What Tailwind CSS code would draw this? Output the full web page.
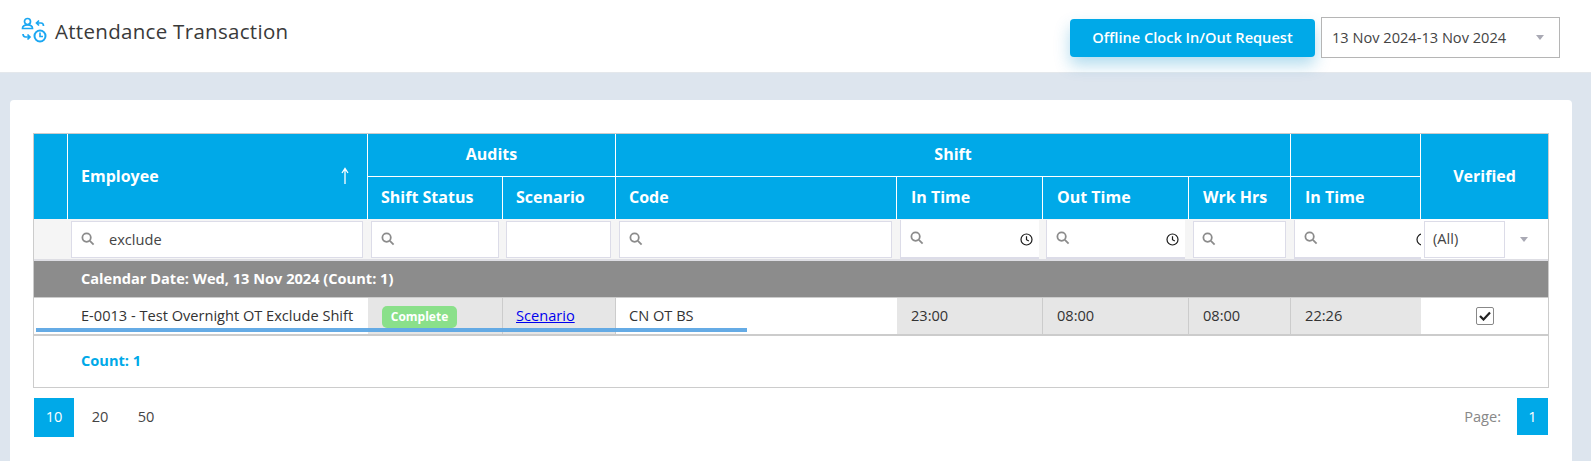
<!DOCTYPE html>
<html lang="en">
<head>
  <meta charset="UTF-8" />
  <title>Attendance Transaction</title>
  <script src="https://cdn.jsdelivr.net/npm/@tailwindcss/browser@4"></script>
</head>
<body class="bg-[#dde5ee] h-[461px] overflow-hidden font-['Open_Sans',sans-serif] text-[14.6px] text-[#333]">

  <!-- Top bar -->
  <header class="h-[73px] bg-white border-b border-[#e4e8ec] flex items-start pl-[21px] pr-[31px]">
    <svg class="mt-[17px] w-[26px] h-[26px] text-[#1aa7f2]" viewBox="0 0 26 26" fill="none" stroke="currentColor" stroke-width="1.700">
      <circle cx="6.500" cy="4.500" r="3"/>
      <path d="M1.500 11.500c0-2.500 2.200-3.700 5-3.700s5 1.200 5 3.700z"/>
      <path d="M18 3.500 15.500 6 18 8.500M15.500 6H20c1.500 0 2.500 1 2.500 3"/>
      <path d="M6.500 17.500 9 20l-2.500 2.500M9 20H4.500C3 20 2 19 2 17"/>
      <circle cx="19" cy="19" r="5.500" stroke-width="2"/>
      <path d="M19 15.500V19.500h3" stroke-width="1.600"/>
    </svg>
    <h1 class="ml-[8px] mt-[17px] text-[20.500px] leading-[28px] font-medium tracking-[0.3px] text-[#3a3a3a]">Attendance Transaction</h1>
    <div class="ml-auto flex items-start">
      <button class="mt-[19px] w-[245px] h-[38px] rounded-[4px] bg-[#00a9e8] text-white font-semibold text-[14.6px] shadow-[0_8px_16px_rgba(0,140,200,0.3)]">Offline Clock In/Out Request</button>
      <div class="ml-[6px] mt-[17px] w-[239px] h-[41px] border border-[#b5b5b5] bg-white flex items-center pl-[10px] pr-[15px] text-[#444]">
        <span>13 Nov 2024-13 Nov 2024</span>
        <span class="ml-auto w-0 h-0 border-x-[4px] border-x-transparent border-t-[5px] border-t-[#a9a9b4]"></span>
      </div>
    </div>
  </header>

  <!-- Card -->
  <main class="ml-[10px] mr-[19px] mt-[27px] h-[361px] bg-white rounded-t-[4px] pl-[23px] pr-[23px] pt-[33px]">
    <div class="relative border border-[#ccc] h-[255px]">
      <table class="table-fixed border-separate border-spacing-0 w-[1514px]">
        <colgroup>
          <col class="w-[34px]"/><col class="w-[300px]"/><col class="w-[135px]"/><col class="w-[113px]"/><col class="w-[281px]"/>
          <col class="w-[146px]"/><col class="w-[146px]"/><col class="w-[102px]"/><col class="w-[130px]"/><col class="w-[127px]"/>
        </colgroup>
        <thead class="bg-[#00a9e8] text-white text-[16px]">
          <tr class="h-[43px]">
            <th rowspan="2" class="border-r border-white"></th>
            <th rowspan="2" class="border-r border-white text-left pl-[13px] pb-[2px] font-bold">
              <div class="flex items-center pr-[17px]">
                <span>Employee</span>
                <svg class="ml-auto w-[10px] h-[18px]" viewBox="0 0 10 18" fill="none" stroke="white" stroke-width="1.300"><path d="M5 17V2M2 6l3-4.500L8 6"/></svg>
              </div>
            </th>
            <th colspan="2" class="border-r border-b border-white pb-[2px] font-bold">Audits</th>
            <th colspan="4" class="border-r border-b border-white pb-[2px] font-bold">Shift</th>
            <th class="border-r border-b border-white"></th>
            <th rowspan="2" class="pb-[2px] font-bold">Verified</th>
          </tr>
          <tr class="h-[42px] text-left">
            <th class="border-r border-white pl-[13px] pb-[2px] font-bold">Shift Status</th>
            <th class="border-r border-white pl-[13px] pb-[2px] font-bold">Scenario</th>
            <th class="border-r border-white pl-[13px] pb-[2px] font-bold">Code</th>
            <th class="border-r border-white pl-[14px] pb-[2px] font-bold">In Time</th>
            <th class="border-r border-white pl-[14px] pb-[2px] font-bold">Out Time</th>
            <th class="border-r border-white pl-[14px] pb-[2px] font-bold">Wrk Hrs</th>
            <th class="border-r border-white pl-[14px] pb-[2px] font-bold">In Time</th>
          </tr>
        </thead>
        <tbody>
          <!-- Filter row -->
          <tr class="h-[42px] bg-[#f5f5f5]">
            <td class="border-b-2 border-[#dedee4]"></td>
            <td class="border-b-2 border-[#dedee4] pl-[3px] pr-[5px]">
              <div class="h-[37px] border border-[#dcdce8] bg-white flex items-center pl-[9px] gap-[14px]">
                <svg class="w-[14px] h-[14px] shrink-0" viewBox="0 0 15 15" fill="none" stroke="#8b8b8b" stroke-width="1.900"><circle cx="6" cy="6" r="4.500"/><path d="m9.500 9.500 4 4"/></svg>
                <span class="text-[#444] pt-[2px]">exclude</span>
              </div>
            </td>
            <td class="border-b-2 border-[#dedee4] pl-[3px] pr-[4px]">
              <div class="h-[37px] border border-[#dcdce8] bg-white flex items-center pl-[9px]">
                <svg class="w-[14px] h-[14px]" viewBox="0 0 15 15" fill="none" stroke="#8b8b8b" stroke-width="1.900"><circle cx="6" cy="6" r="4.500"/><path d="m9.500 9.500 4 4"/></svg>
              </div>
            </td>
            <td class="border-b-2 border-[#dedee4] pl-[3px] pr-[5px]">
              <div class="h-[37px] border border-[#dcdce8] bg-white"></div>
            </td>
            <td class="border-b-2 border-[#dedee4] pl-[3px] pr-[5px]">
              <div class="h-[37px] border border-[#dcdce8] bg-white flex items-center pl-[9px]">
                <svg class="w-[14px] h-[14px]" viewBox="0 0 15 15" fill="none" stroke="#8b8b8b" stroke-width="1.900"><circle cx="6" cy="6" r="4.500"/><path d="m9.500 9.500 4 4"/></svg>
              </div>
            </td>
            <td class="border-b-2 border-[#dedee4] pl-[3px] pr-[4px]">
              <div class="h-[39px] border-l border-b-2 border-[#dcdce8] bg-white flex items-center pl-[9px] pr-[6px]">
                <svg class="w-[14px] h-[14px]" viewBox="0 0 15 15" fill="none" stroke="#8b8b8b" stroke-width="1.900"><circle cx="6" cy="6" r="4.500"/><path d="m9.500 9.500 4 4"/></svg>
                <svg class="ml-auto w-[13px] h-[13px] mt-[3px]" viewBox="0 0 13 13" fill="none" stroke="#1a1a1a" stroke-width="1.200"><circle cx="6.500" cy="6.500" r="5.500"/><path d="M6.500 3.200v3.500l2.300 1.300"/></svg>
              </div>
            </td>
            <td class="border-b-2 border-[#dedee4] pl-[3px] pr-[4px]">
              <div class="h-[39px] border-l border-b-2 border-[#dcdce8] bg-white flex items-center pl-[9px] pr-[6px]">
                <svg class="w-[14px] h-[14px]" viewBox="0 0 15 15" fill="none" stroke="#8b8b8b" stroke-width="1.900"><circle cx="6" cy="6" r="4.500"/><path d="m9.500 9.500 4 4"/></svg>
                <svg class="ml-auto w-[13px] h-[13px] mt-[3px]" viewBox="0 0 13 13" fill="none" stroke="#1a1a1a" stroke-width="1.200"><circle cx="6.500" cy="6.500" r="5.500"/><path d="M6.500 3.200v3.500l2.300 1.300"/></svg>
              </div>
            </td>
            <td class="border-b-2 border-[#dedee4] pl-[4px] pr-[5px]">
              <div class="h-[37px] border border-[#dcdce8] bg-white flex items-center pl-[8px]">
                <svg class="w-[14px] h-[14px]" viewBox="0 0 15 15" fill="none" stroke="#8b8b8b" stroke-width="1.900"><circle cx="6" cy="6" r="4.500"/><path d="m9.500 9.500 4 4"/></svg>
              </div>
            </td>
            <td class="border-b-2 border-[#dedee4] pl-[3px]">
              <div class="h-[39px] border-l border-b-2 border-[#dcdce8] bg-white flex items-center pl-[9px] overflow-hidden">
                <svg class="w-[14px] h-[14px]" viewBox="0 0 15 15" fill="none" stroke="#8b8b8b" stroke-width="1.900"><circle cx="6" cy="6" r="4.500"/><path d="m9.500 9.500 4 4"/></svg>
                <svg class="ml-auto mr-[-8px] w-[13px] h-[13px] mt-[3px]" viewBox="0 0 13 13" fill="none" stroke="#1a1a1a" stroke-width="1.200"><circle cx="6.500" cy="6.500" r="5.500"/><path d="M6.500 3.200v3.500l2.300 1.300"/></svg>
              </div>
            </td>
            <td class="border-b-2 border-[#dedee4] pl-[3px] bg-white">
              <div class="flex items-center">
                <div class="w-[81px] h-[37px] border border-[#dcdce8] flex items-center pl-[8px] text-[#444]">(All)</div>
                <span class="ml-[15px] w-0 h-0 border-x-[4px] border-x-transparent border-t-[5px] border-t-[#a9a9b4]"></span>
              </div>
            </td>
          </tr>
          <!-- Group row -->
          <tr class="h-[36px] bg-[#8c8c8c] text-white">
            <td colspan="10" class="pl-[47px] font-bold">Calendar Date: Wed, 13 Nov 2024 (Count: 1)</td>
          </tr>
          <!-- Data row -->
          <tr class="h-[39px]">
            <td class="border-t border-b-2 border-[#ccc]"></td>
            <td class="border-t border-b-2 border-[#ccc] pl-[13px] whitespace-nowrap">E-0013 - Test Overnight OT Exclude Shift</td>
            <td class="bg-[#e6e6e6] border-t border-r border-b-2 border-[#ccc] pl-[14px]">
              <span class="inline-flex items-center justify-center w-[75px] h-[22px] rounded-[5px] bg-[#8ae08a] text-white text-[12px] font-bold">Complete</span>
            </td>
            <td class="bg-[#e6e6e6] border-t border-r border-b-2 border-[#ccc] pl-[13px]"><a href="#" class="text-[#0000ee] underline">Scenario</a></td>
            <td class="border-t border-b-2 border-[#ccc] pl-[13px]">CN OT BS</td>
            <td class="bg-[#e6e6e6] border-t border-r border-b-2 border-[#ccc] pl-[14px]">23:00</td>
            <td class="bg-[#e6e6e6] border-t border-r border-b-2 border-[#ccc] pl-[14px]">08:00</td>
            <td class="bg-[#e6e6e6] border-t border-r border-b-2 border-[#ccc] pl-[14px]">08:00</td>
            <td class="bg-[#e6e6e6] border-t border-b-2 border-[#ccc] pl-[14px]">22:26</td>
            <td class="border-t border-b-2 border-[#ccc]">
              <span class="mx-auto flex items-center justify-center w-[18px] h-[18px] border border-[#888] rounded-[2px] bg-white">
                <svg class="w-[12px] h-[10px]" viewBox="0 0 12 10" fill="none" stroke="#222" stroke-width="2.200"><path d="m1 5 3.500 3.500L11 1.500"/></svg>
              </span>
            </td>
          </tr>
          <!-- Footer -->
          <tr class="h-[51px]">
            <td></td>
            <td colspan="9" class="pl-[13px] pb-[2px] text-[#00a9e8] font-bold">Count: 1</td>
          </tr>
        </tbody>
      </table>
      <!-- stray underline over the row -->
      <div class="absolute left-[2px] top-[194px] w-[711px] h-[4px] bg-[#5da7e4]/95"></div>
    </div>

    <!-- Pager -->
    <div class="mt-[10px] ml-[1px] mr-[1px] flex items-start">
      <span class="w-[40px] h-[39px] bg-[#00a9e8] text-white flex items-center justify-center pb-[2px]">10</span>
      <span class="ml-[3px] w-[46px] h-[39px] flex items-center justify-center text-[#444] pb-[2px]">20</span>
      <span class="w-[46px] h-[39px] flex items-center justify-center text-[#444] pb-[2px]">50</span>
      <span class="ml-auto h-[37px] flex items-center text-[#888]">Page:</span>
      <span class="ml-[16px] w-[31px] h-[37px] bg-[#00a9e8] text-white flex items-center justify-center">1</span>
    </div>
  </main>
</body>
</html>
